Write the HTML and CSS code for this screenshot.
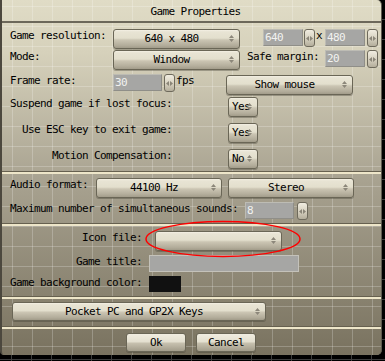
FILE: index.html
```html
<!DOCTYPE html>
<html lang="en">
<head>
    <meta charset="UTF-8">
    <title>Game Properties</title>
    <link rel="stylesheet" href="styles.css">
</head>
<body>
    <div class="win">
        <div class="title">Game Properties</div>

        <div class="sec sec-main">
            <div class="row r1">
                <span class="lbl w103">Game resolution:</span>
                <div class="dd w127">640 x 480<svg class="arr" width="5" height="7" viewBox="0 0 5 7"><path d="M2.5 0 5 3H0zM0 4h5L2.5 7z"/></svg></div>
                <div class="num w40 ml23">640</div>
                <div class="spin ml1"><svg width="7" height="5" viewBox="0 0 7 5"><path d="M0 2.5 3 0v5zM4 0l3 2.5L4 5z"/></svg></div>
                <span class="times">x</span>
                <div class="num w40">480</div>
                <div class="spin ml2"><svg width="7" height="5" viewBox="0 0 7 5"><path d="M0 2.5 3 0v5zM4 0l3 2.5L4 5z"/></svg></div>
            </div>
            <div class="row r2">
                <span class="lbl w103">Mode:</span>
                <div class="dd w127">Window<svg class="arr" width="5" height="7" viewBox="0 0 5 7"><path d="M2.5 0 5 3H0zM0 4h5L2.5 7z"/></svg></div>
                <span class="lbl ml7">Safe margin:</span>
                <div class="num w40 ml6">20</div>
                <div class="spin ml2"><svg width="7" height="5" viewBox="0 0 7 5"><path d="M0 2.5 3 0v5zM4 0l3 2.5L4 5z"/></svg></div>
            </div>
            <div class="row r3">
                <span class="lbl w103">Frame rate:</span>
                <div class="num w49">30</div>
                <div class="spin ml2"><svg width="7" height="5" viewBox="0 0 7 5"><path d="M0 2.5 3 0v5zM4 0l3 2.5L4 5z"/></svg></div>
                <span class="lbl ml1">fps</span>
                <div class="dd w127 ml32 down1">Show mouse<svg class="arr" width="5" height="7" viewBox="0 0 5 7"><path d="M2.5 0 5 3H0zM0 4h5L2.5 7z"/></svg></div>
            </div>
            <div class="row r4">
                <span class="lbl right w162">Suspend game if lost focus:</span>
                <div class="dd small ml56">Yes<svg class="arr" width="5" height="7" viewBox="0 0 5 7"><path d="M2.5 0 5 3H0zM0 4h5L2.5 7z"/></svg></div>
            </div>
            <div class="row r4">
                <span class="lbl right w162">Use ESC key to exit game:</span>
                <div class="dd small ml56">Yes<svg class="arr" width="5" height="7" viewBox="0 0 5 7"><path d="M2.5 0 5 3H0zM0 4h5L2.5 7z"/></svg></div>
            </div>
            <div class="row r6">
                <span class="lbl right w162">Motion Compensation:</span>
                <div class="dd small ml56">No<svg class="arr" width="5" height="7" viewBox="0 0 5 7"><path d="M2.5 0 5 3H0zM0 4h5L2.5 7z"/></svg></div>
            </div>
        </div>

        <div class="sep"></div>

        <div class="sec sec-audio">
            <div class="row r-audio">
                <span class="lbl w86">Audio format:</span>
                <div class="dd w126">44100 Hz<svg class="arr" width="5" height="7" viewBox="0 0 5 7"><path d="M2.5 0 5 3H0zM0 4h5L2.5 7z"/></svg></div>
                <div class="dd w126 ml6">Stereo<svg class="arr" width="5" height="7" viewBox="0 0 5 7"><path d="M2.5 0 5 3H0zM0 4h5L2.5 7z"/></svg></div>
            </div>
            <div class="row r-max">
                <span class="lbl w235">Maximum number of simultaneous sounds:</span>
                <div class="num w49">8</div>
                <div class="spin ml3"><svg width="7" height="5" viewBox="0 0 7 5"><path d="M0 2.5 3 0v5zM4 0l3 2.5L4 5z"/></svg></div>
            </div>
        </div>

        <div class="sep"></div>

        <div class="sec sec-icon">
            <div class="row r-icon">
                <span class="lbl right w132">Icon file:</span>
                <div class="dd w127 ml13"><svg class="arr" width="5" height="7" viewBox="0 0 5 7"><path d="M2.5 0 5 3H0zM0 4h5L2.5 7z"/></svg></div>
            </div>
            <div class="row r-gtitle">
                <span class="lbl right w132">Game title:</span>
                <div class="num field ml7"></div>
            </div>
            <div class="row r-bg">
                <span class="lbl right w132">Game background color:</span>
                <div class="swatch ml7"></div>
            </div>
            <svg class="mark" width="160" height="40" viewBox="0 0 160 40"><ellipse cx="78" cy="19" rx="77" ry="17.5" fill="none" stroke="#f00" stroke-width="1.5"/></svg>
        </div>

        <div class="sep"></div>

        <div class="sec sec-keys">
            <div class="dd wide">Pocket PC and GP2X Keys<svg class="arr" width="5" height="7" viewBox="0 0 5 7"><path d="M2.5 0 5 3H0zM0 4h5L2.5 7z"/></svg></div>
        </div>

        <div class="sep"></div>

        <div class="sec sec-btns">
            <div class="btn">Ok</div>
            <div class="btn">Cancel</div>
        </div>
    </div>
</body>
</html>
```

FILE: styles.css
```css
body {
    margin: 0;
    width: 385px;
    height: 361px;
    overflow: hidden;
    background-color: #000;
    background-image:
        linear-gradient(90deg, #3c3c3c 1px, transparent 1px),
        linear-gradient(#3c3c3c 1px, transparent 1px);
    background-size: 20px 20px;
    background-position: 11px 19px;
    font-family: "DejaVu Sans Mono", "Liberation Mono", monospace;
    font-size: 11px;
    letter-spacing: -0.62px;
    color: #000;
}
.win {
    position: relative;
    width: 379px;
    height: 355px;
    border-left: 2px solid #4c483e;
    border-right: 1px solid #5e5a4e;
    border-radius: 0 5px 5px 4px;
    box-sizing: content-box;
    background-color: #b0aa96;
    background-image:
        linear-gradient(90deg, rgba(255, 255, 255, 0.22) 1px, transparent 1px),
        linear-gradient(rgba(255, 255, 255, 0.22) 1px, transparent 1px),
        linear-gradient(#e0dcc6, #d6d1bb 15%, #a9a391 50%, #79725f);
    background-size: 20px 20px, 20px 20px, 100% 100%;
    background-position: 10px 6px, 10px 6px, 0 0;
    display: flex;
    flex-direction: column;
}
.title {
    height: 16px;
    padding-top: 5px;
    line-height: 14px;
    text-align: center;
    padding-left: 8px;
    border-bottom: 2px solid #6c685a;
}
.sec {
    position: relative;
    padding-left: 8px;
}
.sep {
    height: 2px;
    border-top: 1px solid #66604f;
    background: #eee6c9;
}
.sec-main { padding-top: 6px; height: 142px; }
.sec-audio { padding-top: 4px; height: 45px; }
.sec-icon { padding-top: 5px; height: 65px; }
.sec-keys { padding-top: 3px; padding-left: 10px; height: 24px; }
.sec-btns {
    padding-top: 4px;
    padding-left: 124px;
    display: flex;
    gap: 10px;
    flex: 1;
}
.row {
    display: flex;
    align-items: flex-start;
}
.r1 { height: 21px; }
.r2 { height: 24px; }
.r3 { height: 23px; }
.r4 { height: 26px; }
.r6 { height: 22px; }
.r-audio { height: 24px; }
.r-max { height: 21px; }
.r-icon { height: 24px; }
.r-gtitle { height: 21px; }
.r-bg { height: 20px; }

.lbl {
    line-height: 14px;
    white-space: pre;
    flex: none;
}
.right { text-align: right; }
.w86 { width: 86px; }
.w103 { width: 103px; }
.w132 { width: 132px; }
.w162 { width: 162px; }
.w235 { width: 235px; }
.w40 { width: 40px; }
.w49 { width: 49px; }
.w126 { width: 126px; }
.w127 { width: 127px; }
.ml1 { margin-left: 1px; }
.ml2 { margin-left: 2px; }
.ml3 { margin-left: 3px; }
.ml6 { margin-left: 6px; }
.ml7 { margin-left: 7px; }
.ml13 { margin-left: 13px; }
.ml23 { margin-left: 23px; }
.ml32 { margin-left: 32px; }
.ml56 { margin-left: 56px; }
.down1 { margin-top: 1px; }

.dd {
    position: relative;
    box-sizing: border-box;
    height: 20px;
    line-height: 18px;
    padding-right: 10px;
    text-align: center;
    border: 1px solid #6a6656;
    border-radius: 3px;
    background: linear-gradient(#f4f0e4, #e8e4d4 10%, #e3dfcd 45%, #cbc5b3 55%, #b3ad9b 85%, #a29c8a);
    box-shadow: 0 1px 0 rgba(60, 56, 46, 0.35);
    flex: none;
}
.dd.small {
    width: 30px;
    text-align: left;
    padding-left: 3px;
}
.dd.wide {
    width: 254px;
    height: 19px;
    line-height: 17px;
}
.arr {
    position: absolute;
    right: 5px;
    top: 5px;
    fill: #8c877a;
}
.num {
    box-sizing: border-box;
    height: 17px;
    line-height: 15px;
    padding-left: 1px;
    background: #a6a6a4;
    border: 1px solid #8f8e88;
    border-top-color: #bdbcb4;
    border-left-color: #bdbcb4;
    color: #f2f2f0;
    flex: none;
}
.num.field {
    width: 150px;
    border-color: #c4c2ba;
}
.spin {
    box-sizing: border-box;
    width: 11px;
    height: 18px;
    display: flex;
    align-items: center;
    justify-content: center;
    border: 1px solid #6e6a5c;
    border-radius: 3px;
    background: linear-gradient(#f0ece0, #d8d3c2 50%, #b4ae9c);
    fill: #8a8578;
    flex: none;
}
.times {
    width: 9px;
    line-height: 14px;
    padding-left: 1px;
}
.swatch {
    width: 32px;
    height: 16px;
    background: #111;
}
.mark {
    position: absolute;
    left: 143px;
    top: -6px;
}
.btn {
    box-sizing: border-box;
    width: 60px;
    height: 19px;
    line-height: 17px;
    text-align: center;
    border: 1px solid #6a6656;
    border-radius: 3px;
    background: linear-gradient(#f0ece0, #e4e0d0 45%, #c6c0ae 55%, #a29c8a);
    box-shadow: 0 1px 0 rgba(60, 56, 46, 0.35);
}
```
